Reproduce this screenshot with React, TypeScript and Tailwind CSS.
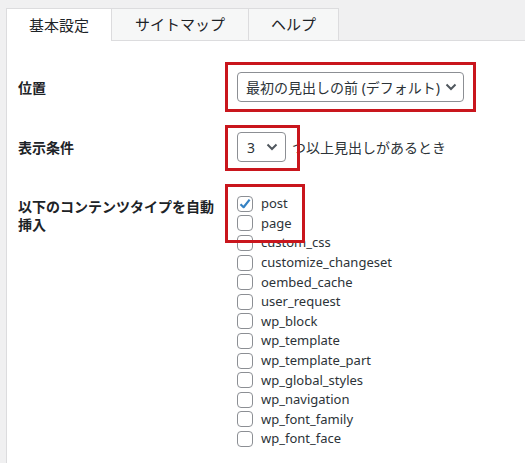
import React from "react";

const types = [
  "post",
  "page",
  "custom_css",
  "customize_changeset",
  "oembed_cache",
  "user_request",
  "wp_block",
  "wp_template",
  "wp_template_part",
  "wp_global_styles",
  "wp_navigation",
  "wp_font_family",
  "wp_font_face",
];

function Chevron() {
  return (
    <svg width="12" height="8" viewBox="0 0 12 8" className="shrink-0">
      <path d="M1.5 1.5 L6 6 L10.5 1.5" fill="none" stroke="#50575e" strokeWidth="2" />
    </svg>
  );
}

function Checkbox({ checked }: { checked?: boolean }) {
  return (
    <span className="relative w-[16px] h-[16px] border border-[#8c8f94] rounded-[4px] bg-white shrink-0">
      {checked && (
        <svg width="16" height="16" viewBox="0 0 16 16" className="absolute left-[-1px] top-[-1px]">
          <path d="M3.5 8.2 L6.6 11.2 L12.6 3.6" fill="none" stroke="#3582c4" strokeWidth="2.2" strokeLinejoin="round" />
        </svg>
      )}
    </span>
  );
}

export default function App() {
  return (
    <div
      className="relative w-[525px] h-[463px] overflow-hidden bg-[#f0f0f1] pl-[6px] pt-[8px] text-[#1d2327]"
      style={{ fontFamily: '"Noto Sans", "Noto Sans CJK JP", sans-serif' }}
    >
      <div className="flex h-[33px]">
        <div className="w-[106px] h-[33px] bg-white border-l border-t border-r border-[#dcdcde] flex items-center justify-center text-[15px] text-[#1d2327]">
          基本設定
        </div>
        <div className="w-[137px] h-[33px] bg-[#f6f7f7] border-t border-r border-b border-[#dcdcde] flex items-center justify-center text-[15px] text-[#1d2327]">
          サイトマップ
        </div>
        <div className="w-[90px] h-[33px] bg-[#f6f7f7] border-t border-r border-b border-[#dcdcde] flex items-center justify-center text-[15px] text-[#1d2327]">
          ヘルプ
        </div>
        <div className="flex-1 border-b border-[#dcdcde]" />
      </div>
      <div className="h-full bg-white border-l border-[#dcdcde] pl-[11px] pt-[31px] text-[14px]">
        <div className="flex items-center h-[30px]">
          <div className="w-[219px] font-bold">位置</div>
          <div className="w-[227px] h-[30px] border border-[#8c8f94] rounded-[4px] flex items-center justify-between pl-[8px] pr-[6px] text-[#2c3338]">
            <span>最初の見出しの前 (デフォルト)</span>
            <Chevron />
          </div>
        </div>
        <div className="flex items-center h-[30px] mt-[30px]">
          <div className="w-[219px] font-bold">表示条件</div>
          <div className="w-[49px] h-[30px] border border-[#8c8f94] rounded-[4px] flex items-center justify-between pl-[9px] pr-[7px] text-[#2c3338]">
            <span>3</span>
            <Chevron />
          </div>
          <span className="ml-[6px] text-[#2c3338]">つ以上見出しがあるとき</span>
        </div>
        <div className="flex mt-[32px]">
          <div className="w-[219px] font-bold leading-[18px] pt-[4px]">
            以下のコンテンツタイプを自動
            <br />
            挿入
          </div>
          <div className="flex flex-col">
            {types.map((t, i) => (
              <label key={t} className="flex items-center h-[19.6px] gap-[8px] text-[#2c3338] text-[13px]">
                <Checkbox checked={i === 0} />
                <span className="leading-none">{t}</span>
              </label>
            ))}
          </div>
        </div>
      </div>
      <div className="absolute left-[225px] top-[62px] w-[251px] h-[50px] border-[3px] border-[#c9161d]" />
      <div className="absolute left-[225px] top-[125px] w-[75px] h-[46px] border-[3px] border-[#c9161d]" />
      <div className="absolute left-[225px] top-[184px] w-[80px] h-[59px] border-[3px] border-[#c9161d]" />
    </div>
  );
}
